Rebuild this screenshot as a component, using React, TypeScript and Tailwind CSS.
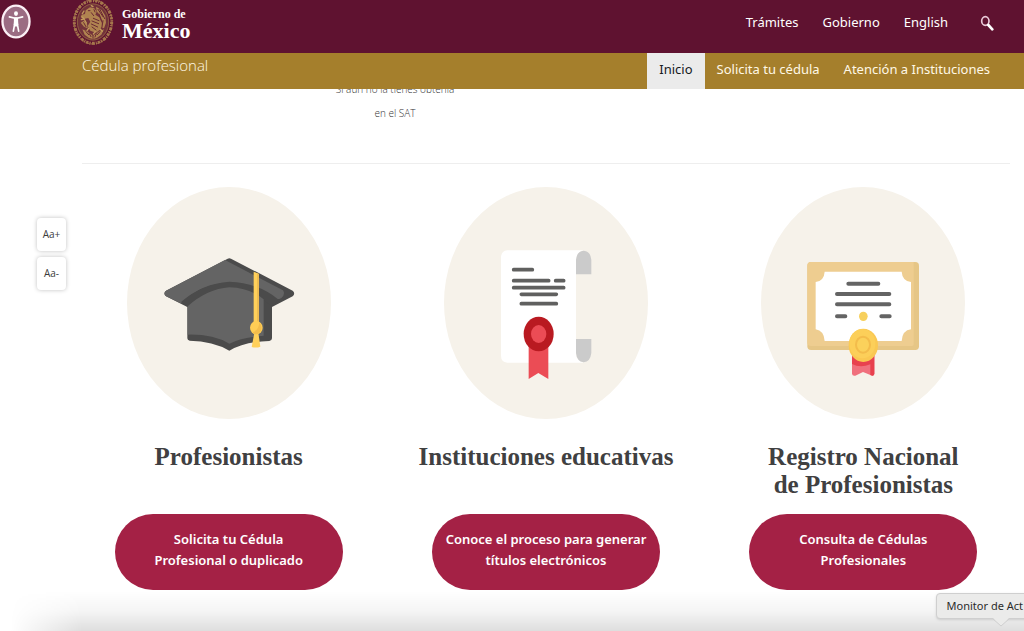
import React from "react";

const topLinks = ["Trámites", "Gobierno", "English"];

const MexicoSeal: React.FC = () => (
  <svg viewBox="0 0 126 144" className="-mt-0.5 h-12 w-[42px] shrink-0" aria-hidden="true">
    <ellipse cx="63" cy="72" rx="48" ry="56" fill="#73323a" />
    <g fill="none" stroke="#a5764c">
      <ellipse cx="63" cy="72" rx="56" ry="64" strokeWidth="9" strokeDasharray="7 3 3 3 9 4 4 3" />
      <ellipse cx="63" cy="72" rx="57" ry="66" strokeWidth="3" strokeDasharray="13 5 8 4" />
      <ellipse cx="63" cy="72" rx="47" ry="54" strokeWidth="3" stroke="#8d5b40" />
    </g>
    <g fill="#b08350">
      <path d="M41 37l13-9 13 3 7 10-4 9 12 8 7 17-3 19-14 10-17-6-8-14 8-13-6-11-14 3-9-6 3-7 10-2z" />
      <path d="M72 26l17 10 11 17 2 21-6 17-9-4 2-18-6-17-9-12z" />
      <path d="M26 74l10-6 9 9 2 14-11-5zM31 94l16 7 16 12 17-12 16-7-8 16-14 10-11 3-12-3-13-10z" />
    </g>
    <g fill="none" stroke="#6b2833" strokeWidth="3" strokeLinecap="round">
      <path d="M49 38h5M58 44l7 9M64 61l17 7M60 69l20 8M58 78l19 9M60 87l12 9" />
      <path d="M78 34l15 22M83 33l15 29M81 48l10 25M93 68l-3 19M35 74l7 12M66 35l3 7" />
      <path d="M42 101l8 9M52 107l5 9M63 111v10M73 107l-4 10M84 101l-8 9" />
    </g>
    <path
      d="M30 57l7 6M28 65l8-2M38 66l5 9M50 91l-5 7M70 101l-6 7M85 94l6 6M58 23l5 3M31 47l5-8"
      fill="none"
      stroke="#c39a5d"
      strokeWidth="4"
      strokeLinecap="round"
    />
  </svg>
);

const AccessibilityIcon: React.FC = () => (
  <svg viewBox="0 0 90 106" className="h-[35px] w-[30px]" aria-hidden="true">
    <ellipse cx="45" cy="53" rx="41" ry="48" fill="#9b6c83" stroke="#fbeff5" strokeWidth="7" />
    <ellipse cx="45" cy="29" rx="6" ry="7" fill="#fff" />
    <path d="M39 41h12l1 21-3 6h-8l-3-6z" fill="#fff" />
    <path
      d="M25 39l17 4h6l17-4M41 60l-4 22M49 60l4 22"
      fill="none"
      stroke="#fff"
      strokeWidth="5"
      strokeLinecap="round"
      strokeLinejoin="round"
    />
  </svg>
);

const SearchIcon: React.FC = () => (
  <svg viewBox="0 0 42 48" className="h-4 w-3.5" fill="none" aria-hidden="true">
    <ellipse cx="16" cy="18" rx="11" ry="13" stroke="#e9c9d8" strokeWidth="5" />
    <path d="M25 30l12 13" stroke="#fff" strokeWidth="8" strokeLinecap="round" />
  </svg>
);

const GraduationCap: React.FC = () => (
  <svg viewBox="378 21 612 696" className="h-[232px] w-[204px]" aria-hidden="true">
    <ellipse cx="684" cy="369" rx="306" ry="348" fill="#f6f2ea" />
    <path
      d="M680 236q5-3 10 0L875 332q9 8 0 17l-62 32v94q0 7-8 8-73 2-120 29-49-29-119-30-7-1-7-7v-94l-64-32q-9-9 0-17z"
      fill="#4b4b4b"
    />
    <path
      d="M672 240L846 331q8 12-5 23-11 6-21 2-59-44-135-48-88 4-146 62l-45-22q-8-7 0-15z"
      fill="#646464"
    />
    <path
      d="M685 305q-80 5-144 60l18 15q58-52 125-57 70 3 103 36l26 20 20-20q-60-50-148-54z"
      fill="#4b4b4b"
    />
    <path d="M560 379q58-52 125-57 62 2 103 36v109q-66 5-103 24-50-29-125-27z" fill="#646464" />
    <path d="M758 275l16 7v150h-16z" fill="#ffd05a" />
    <path d="M768 279l6 3v150h-6z" fill="#efbd51" />
    <path d="M760 458h12l6 42q-12 5-26 1z" fill="#ffd05a" />
    <ellipse cx="766" cy="443" rx="19" ry="20" fill="#ffcd55" />
    <path d="M775 427q14 18-1 33-11 7-20-3 20-6 21-30z" fill="#f4bd4b" />
  </svg>
);

const TitleScroll: React.FC = () => (
  <svg viewBox="42 21 612 696" className="h-[232px] w-[204px]" aria-hidden="true">
    <ellipse cx="348" cy="369" rx="306" ry="348" fill="#f6f2ea" />
    <path d="M232 211h229q-23 6-23 32v277q0 22 23 28H232q-19-2-19-21V231q1-18 19-20z" fill="#fff" />
    <path d="M438 283v-44q3-26 23-27 20 1 23 27v44zM438 477h46v42q-3 26-23 28-20-2-23-28z" fill="#cbcbcb" />
    <path
      d="M251 269h56M251 302h105M377 302h24M251 323h150M274 343h105M274 371h105"
      stroke="#60605f"
      strokeWidth="11"
      strokeLinecap="round"
    />
    <path d="M296 490h59v107l-30-18-29 18z" fill="#eb4c55" />
    <ellipse cx="326" cy="462" rx="45" ry="52" fill="#b91a21" />
    <ellipse cx="326" cy="462" rx="23" ry="27" fill="#eb4c55" />
  </svg>
);

const FramedDiploma: React.FC = () => (
  <svg viewBox="33 21 612 696" className="h-[232px] w-[204px]" aria-hidden="true">
    <ellipse cx="339" cy="369" rx="306" ry="348" fill="#f6f2ea" />
    <rect x="172" y="246" width="335" height="264" rx="11" fill="#e6c686" />
    <path d="M182 246h309v247q0 5-5 5H183q-11 0-11-12V257q0-10 10-11z" fill="#eecd90" />
    <path
      d="M224 275h231q2 28 28 31v142q-26 3-28 35H224q-2-31-27-35V306q25-3 27-31z"
      fill="#fff"
    />
    <path
      d="M295 311h90M261 342h157M261 373h157M261 409h25M394 409h25"
      stroke="#646464"
      strokeWidth="12"
      strokeLinecap="round"
    />
    <ellipse cx="340" cy="409" rx="13" ry="14" fill="#f7d05d" />
    <path d="M306 525h67v57q-2 8-10 4l-24-10-23 11q-9 2-10-6z" fill="#f0707d" />
    <path d="M306 525h67v57q-2 8-12 3v-32q-30 12-55-1z" fill="#e8414e" />
    <ellipse cx="340" cy="496" rx="44" ry="50" fill="#fac852" />
    <ellipse cx="337" cy="491" rx="39" ry="44" fill="#fccf59" />
    <ellipse cx="339" cy="494" rx="21" ry="24" fill="#fbd15b" stroke="#f3bc4b" strokeWidth="6" />
  </svg>
);

const cards = [
  {
    art: <GraduationCap />,
    title: ["Profesionistas"],
    action: ["Solicita tu Cédula", "Profesional o duplicado"],
  },
  {
    art: <TitleScroll />,
    title: ["Instituciones educativas"],
    action: ["Conoce el proceso para generar", "títulos electrónicos"],
  },
  {
    art: <FramedDiploma />,
    title: ["Registro Nacional", "de Profesionistas"],
    action: ["Consulta de Cédulas", "Profesionales"],
  },
];

const Lines: React.FC<{ items: string[] }> = ({ items }) => (
  <>
    {items.map((line) => (
      <span key={line} className="block whitespace-nowrap">
        {line}
      </span>
    ))}
  </>
);

const Header: React.FC = () => (
  <header className="relative z-10">
    <div className="flex h-[53px] items-start justify-between bg-[#5f1230] pr-[30px] text-white">
      <div className="flex">
        <button type="button" aria-label="Accesibilidad" className="ml-px mt-1 h-[35px]">
          <AccessibilityIcon />
        </button>
        <a href="#" className="ml-[41px] flex items-start gap-2 font-['Liberation_Serif',serif] font-bold">
          <MexicoSeal />
          <span className="pt-2">
            <span className="block text-xs leading-3">Gobierno de</span>
            <span className="block text-[22px] leading-[22px]">México</span>
          </span>
        </a>
      </div>
      <nav className="flex h-[46px] items-center gap-6 text-[13px]">
        {topLinks.map((link) => (
          <a key={link} href="#">
            {link}
          </a>
        ))}
        <button type="button" aria-label="Buscar" className="ml-2">
          <SearchIcon />
        </button>
      </nav>
    </div>
    <div className="flex h-9 items-start justify-between bg-[#a57f2c] pl-[82px] pr-[22px] text-[#fff8e6]">
      <a href="#" className="font-['Open_Sans',sans-serif] text-[15px] font-light leading-6">
        Cédula profesional
      </a>
      <nav className="flex h-9 text-[13px] leading-8">
        <a href="#" aria-current="page" className="bg-[#ebebeb] px-3 text-[#161a1d]">
          Inicio
        </a>
        <a href="#" className="px-3">
          Solicita tu cédula
        </a>
        <a href="#" className="px-3">
          Atención a Instituciones
        </a>
      </nav>
    </div>
  </header>
);

const App: React.FC = () => {
  return (
    <div className="relative flex min-h-screen flex-col overflow-hidden bg-white font-['Noto_Sans',sans-serif]">
      <Header />
      <main className="grow pl-[82px] pr-3.5 pb-10">
        <p className="-mt-3 ml-60 w-[146px] text-center font-['Open_Sans',sans-serif] text-[10px] font-light leading-6 text-[#333333]">
          <Lines items={["Si aún no la tienes obtenla", "en el SAT"]} />
        </p>
        <hr className="mt-[38px] border-[#eeeeee]" />
        <section className="-mx-3 mt-[23px] grid grid-cols-3">
          {cards.map((card) => (
            <article key={card.title[0]} className="flex flex-col items-center text-center">
              {card.art}
              <h2 className="mt-6 h-[71px] font-['Liberation_Serif',serif] text-[25px] font-bold leading-7 text-[#404041]">
                <Lines items={card.title} />
              </h2>
              <a
                href="#"
                className="flex h-[76px] w-[228px] flex-col justify-center rounded-full bg-[#a42145] pb-1 text-[13px] font-semibold leading-[21px] text-white"
              >
                <Lines items={card.action} />
              </a>
            </article>
          ))}
        </section>
      </main>

      <div className="absolute left-[37px] top-[218px] flex flex-col gap-1.5 font-['Open_Sans',sans-serif] text-[10px] text-[#3c3c3c]">
        <button type="button" className="h-[33px] w-[29px] rounded-sm bg-white shadow-[0_0_4px_rgba(0,0,0,0.25)]">
          Aa+
        </button>
        <button type="button" className="h-[33px] w-[29px] rounded-sm bg-white shadow-[0_0_4px_rgba(0,0,0,0.25)]">
          Aa-
        </button>
      </div>

      <div className="pointer-events-none absolute inset-x-0 bottom-0 h-10 bg-linear-to-b from-transparent via-black/4 to-black/13 mask-l-from-92% mask-l-to-99%" />
      <div
        role="tooltip"
        className="absolute -right-3 bottom-3 z-10 h-[26px] rounded-sm border border-[#cfcfcf] bg-[#ebebea] pl-2.5 pr-3 text-[11px] leading-6 text-[#2b2b2b] shadow-sm"
      >
        Monitor de Act
        <svg viewBox="0 0 16 9" className="absolute right-[26px] top-6 h-[9px] w-4" aria-hidden="true">
          <path d="M0 0h16L8 8z" fill="#ebebea" />
          <path d="M0 1l8 7 8-7" fill="none" stroke="#cfcfcf" />
        </svg>
      </div>
    </div>
  );
};

export default App;
